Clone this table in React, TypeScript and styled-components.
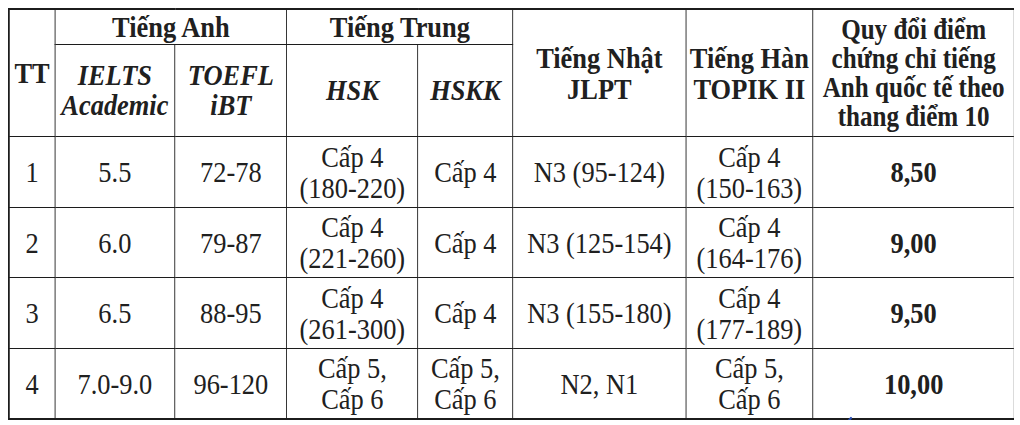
import React from "react";
import styled, { createGlobalStyle } from "styled-components";

const SCALE = 0.88;

const Global = createGlobalStyle`
  html, body { margin: 0; padding: 0; background: #ffffff; }
  body { padding: 8px; font-family: "Liberation Serif", "Times New Roman", serif; color: #222; }
`;

const Page = styled.div`
  position: relative;
  width: 1006px;
  overflow: hidden;
`;

const Squeeze = styled.div`
  width: ${Math.round(1006 / SCALE)}px;
  transform: scaleX(${SCALE});
  transform-origin: left top;
`;

const Table = styled.table`
  width: 100%;
  table-layout: fixed;
  border-collapse: collapse;
  border: 2px solid #1c1c1c;
  font-family: "Liberation Serif", "Times New Roman", serif;
  font-size: 30px;
  color: #202020;
`;

const Row = styled.tr<{ $h: number }>`
  height: ${(p) => p.$h}px;
`;

const Head = styled.th<{ $italic?: boolean; $lh?: number; $size?: number }>`
  border: 1px solid #1c1c1c;
  padding: 0 2px;
  text-align: center;
  vertical-align: middle;
  font-weight: bold;
  font-style: ${(p) => (p.$italic ? "italic" : "normal")};
  font-size: ${(p) => p.$size ?? 30}px;
  line-height: ${(p) => p.$lh ?? 30}px;
`;

const Cell = styled.td<{ $bold?: boolean }>`
  border: 1px solid #1c1c1c;
  padding: 0 2px;
  text-align: center;
  vertical-align: middle;
  font-weight: ${(p) => (p.$bold ? "bold" : "normal")};
  line-height: 31px;
`;

const Mark = styled.svg`
  position: absolute;
  left: 834px;
  top: 408px;
`;

const widths = [46, 120, 112, 131, 95, 173, 127, 202];

const rows = [
  ["1", "5.5", "72-78", ["Cấp 4", "(180-220)"], ["Cấp 4"], ["N3 (95-124)"], ["Cấp 4", "(150-163)"], "8,50"],
  ["2", "6.0", "79-87", ["Cấp 4", "(221-260)"], ["Cấp 4"], ["N3 (125-154)"], ["Cấp 4", "(164-176)"], "9,00"],
  ["3", "6.5", "88-95", ["Cấp 4", "(261-300)"], ["Cấp 4"], ["N3 (155-180)"], ["Cấp 4", "(177-189)"], "9,50"],
  ["4", "7.0-9.0", "96-120", ["Cấp 5,", "Cấp 6"], ["Cấp 5,", "Cấp 6"], ["N2, N1"], ["Cấp 5,", "Cấp 6"], "10,00"],
] as const;

const heights = [71, 70, 71, 71];

function Lines({ lines }: { lines: readonly string[] }) {
  return (
    <>
      {lines.map((l, i) => (
        <React.Fragment key={i}>
          {i > 0 && <br />}
          {l}
        </React.Fragment>
      ))}
    </>
  );
}

export default function App() {
  return (
    <Page>
      <Global />
      <Squeeze>
        <Table>
          <colgroup>
            {widths.map((w, i) => (
              <col key={i} style={{ width: w / SCALE }} />
            ))}
          </colgroup>
          <thead>
            <Row $h={35}>
              <Head rowSpan={2}>TT</Head>
              <Head colSpan={2}>Tiếng Anh</Head>
              <Head colSpan={2}>Tiếng Trung</Head>
              <Head rowSpan={2} $lh={31}>
                Tiếng Nhật
                <br />
                JLPT
              </Head>
              <Head rowSpan={2} $lh={31}>
                Tiếng Hàn
                <br />
                TOPIK II
              </Head>
              <Head rowSpan={2} $lh={29} $size={28.5}>
                Quy đổi điểm
                <br />
                chứng chỉ tiếng
                <br />
                Anh quốc tế theo
                <br />
                thang điểm 10
              </Head>
            </Row>
            <Row $h={92}>
              <Head $italic>
                IELTS
                <br />
                Academic
              </Head>
              <Head $italic>
                TOEFL
                <br />
                iBT
              </Head>
              <Head $italic>HSK</Head>
              <Head $italic>HSKK</Head>
            </Row>
          </thead>
          <tbody>
            {rows.map((r, i) => (
              <Row key={i} $h={heights[i]}>
                <Cell>{r[0]}</Cell>
                <Cell>{r[1]}</Cell>
                <Cell>{r[2]}</Cell>
                <Cell>
                  <Lines lines={r[3]} />
                </Cell>
                <Cell>
                  <Lines lines={r[4]} />
                </Cell>
                <Cell>
                  <Lines lines={r[5]} />
                </Cell>
                <Cell>
                  <Lines lines={r[6]} />
                </Cell>
                <Cell $bold>{r[7]}</Cell>
              </Row>
            ))}
          </tbody>
        </Table>
      </Squeeze>
      <Mark width="12" height="10" viewBox="0 0 12 10">
        <path d="M3 9 L9 2" stroke="#2a4fb0" strokeWidth="2.2" strokeLinecap="round" />
      </Mark>
    </Page>
  );
}
